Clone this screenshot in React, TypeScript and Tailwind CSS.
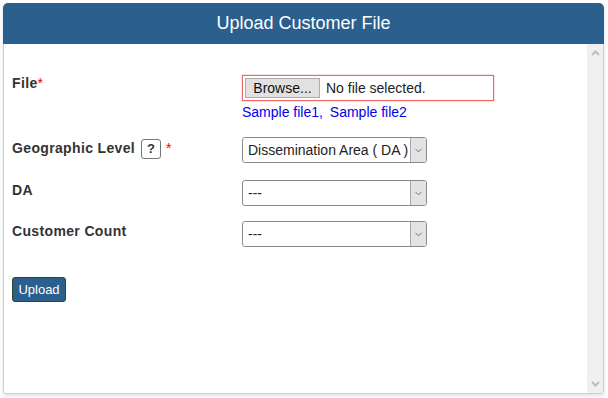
import { ChevronDown } from "lucide-react";

function SelectBox({ value }: { value: string }) {
  return (
    <div className="flex h-[26px] w-[185px] items-stretch overflow-hidden rounded-[3px] border border-[#8a8a8a] bg-white">
      <div className="flex flex-1 items-center overflow-hidden whitespace-nowrap pl-[5px] text-[14px] text-[#222]">
        {value}
      </div>
      <div className="flex w-[16px] items-center justify-center border-l border-[#a8a8a8] bg-[#e3e3e3]">
        <ChevronDown className="h-[11px] w-[11px] text-[#444]" strokeWidth={1.5} />
      </div>
    </div>
  );
}

function Row({ label, children, className }: { label: React.ReactNode; children: React.ReactNode; className?: string }) {
  return (
    <div className={"flex items-start " + (className ?? "")}>
      <div className="w-[230px] shrink-0 text-[14px] font-bold tracking-[0.35px] text-[#333]">{label}</div>
      <div>{children}</div>
    </div>
  );
}

export default function App() {
  return (
    <div className="h-[398px] w-[608px] bg-white p-[3px] pr-[4px] font-['Liberation_Sans',Arial,sans-serif]">
      <div className="flex h-[391px] flex-col shadow-[0_2px_4px_rgba(0,0,0,0.12)]">
        {/* Header */}
        <div className="flex h-[41px] items-center justify-center rounded-t-[5px] bg-[#2a5f8e] text-[18px] text-white">
          Upload Customer File
        </div>

        {/* Body */}
        <div className="flex flex-1 rounded-b-[3px] border border-t-0 border-[#cfcfcf] bg-white">
          <div className="flex-1 pl-[8px] pt-[29px]">
            <Row label={<span>File<span className="font-normal text-[#e00]">*</span></span>}>
              <div className="mt-[2px] flex h-[26px] w-[252px] items-center border border-[#ee6666] pl-[2px] shadow-[0_0_2px_rgba(255,0,0,0.35)]">
                <div className="flex h-[20px] w-[75px] items-center justify-center border border-[#adadad] bg-[#e1e1e1] text-[14px] text-[#111]">
                  Browse...
                </div>
                <span className="ml-[6px] text-[14px] text-[#222]">No file selected.</span>
              </div>
              <div className="mt-[1px] text-[14px] text-[#0000ee]">
                <span>Sample file1</span>, <span className="ml-[3px]">Sample file2</span>
              </div>
            </Row>

            <Row className="mt-[15px]" label={
              <span className="flex items-center">
                Geographic Level
                <span className="ml-[6px] flex h-[20px] w-[20px] items-center justify-center rounded-[3px] border border-[#777] text-[13px] tracking-normal">?</span>
                <span className="ml-[5px] font-normal text-[#e00]">*</span>
              </span>
            }>
              <div className="-mt-[1px]">
                <SelectBox value="Dissemination Area ( DA )" />
              </div>
            </Row>

            <Row className="mt-[17px]" label="DA">
              <SelectBox value="---" />
            </Row>

            <Row className="mt-[15px]" label="Customer Count">
              <SelectBox value="---" />
            </Row>

            <button className="mt-[30px] flex h-[25px] w-[54px] items-center justify-center rounded-[3px] border border-[#2e4a24] bg-[#2a5f8e] text-[13px] text-white">
              Upload
            </button>
          </div>

          {/* Scrollbar */}
          <div className="flex w-[16px] flex-col items-center justify-between bg-[#f0f0f0] py-[6px]">
            <svg width="9" height="6" viewBox="0 0 9 6">
              <path d="M1 5 L4.5 1.5 L8 5" stroke="#bdbdbd" strokeWidth="2" fill="none" />
            </svg>
            <svg width="9" height="6" viewBox="0 0 9 6">
              <path d="M1 1 L4.5 4.5 L8 1" stroke="#bdbdbd" strokeWidth="2" fill="none" />
            </svg>
          </div>
        </div>
      </div>
    </div>
  );
}
